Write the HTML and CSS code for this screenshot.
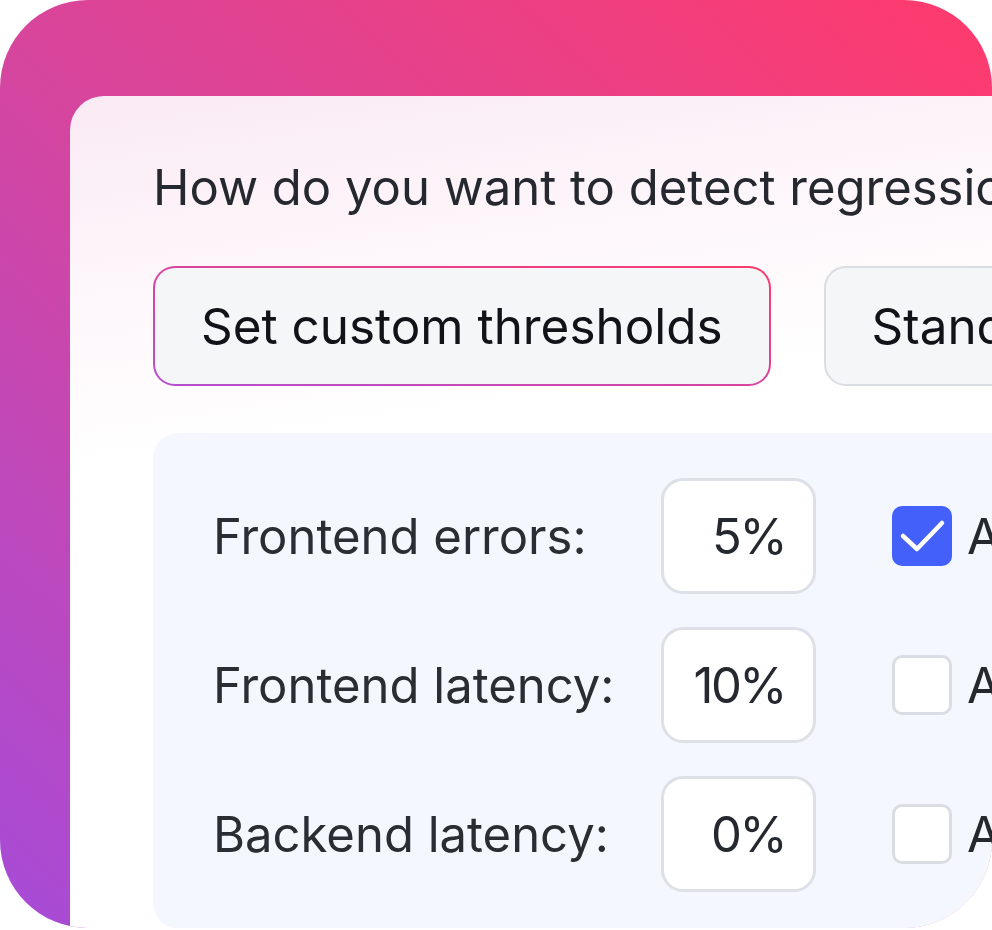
FILE: index.html
```html
<!DOCTYPE html>
<html lang="en">
<head>
    <meta charset="UTF-8">
    <meta name="viewport" content="width=device-width, initial-scale=1.0">
    <title>Regression detection</title>
    <link rel="stylesheet" href="styles.css">
</head>
<body>
    <div class="frame">
        <div class="card">
            <h1 class="question">How do you want to detect regressions?</h1>

            <div class="choices">
                <button class="choice active">Set custom thresholds</button>
                <button class="choice">Standard detection</button>
            </div>

            <div class="panel">
                <div class="row">
                    <label class="row-label">Frontend errors:</label>
                    <input class="pct" type="text" value="5%">
                    <span class="check checked">
                        <svg width="60" height="60" viewBox="0 0 60 60">
                            <path d="M11 30 L25 43 L50 17" fill="none" stroke="#fff" stroke-width="4.5" stroke-linecap="round" stroke-linejoin="round"/>
                        </svg>
                    </span>
                    <span class="check-label">Alert on regression</span>
                </div>
                <div class="row">
                    <label class="row-label">Frontend latency:</label>
                    <input class="pct" type="text" value="10%">
                    <span class="check"></span>
                    <span class="check-label">Alert on regression</span>
                </div>
                <div class="row">
                    <label class="row-label">Backend latency:</label>
                    <input class="pct" type="text" value="0%">
                    <span class="check"></span>
                    <span class="check-label">Alert on regression</span>
                </div>
            </div>
        </div>
    </div>
</body>
</html>
```

FILE: styles.css
```css
body {
    margin: 0;
    background-color: #ffffff;
    font-family: Inter, 'Noto Sans', sans-serif;
    color: #25282f;
}
.frame {
    width: 992px;
    height: 928px;
    box-sizing: border-box;
    padding: 96px 0 0 70px;
    border-radius: 88px;
    overflow: hidden;
    background: linear-gradient(to top right, #a64bd8, #d8459b 50%, #ff3a6c);
}
.card {
    width: 1200px;
    height: 900px;
    box-sizing: border-box;
    padding: 62px 0 0 83px;
    border-top-left-radius: 34px;
    background: linear-gradient(172deg, #faeaf4 0%, #fdf6fa 18%, #ffffff 35%);
}
.question {
    margin: 0;
    font-size: 49px;
    font-weight: 400;
    line-height: 60px;
    white-space: nowrap;
    color: #25282f;
}
.choices {
    display: flex;
    gap: 53px;
    margin-top: 48px;
}
.choice {
    flex-shrink: 0;
    height: 120px;
    padding: 0 46px;
    border: 2px solid #dadde2;
    border-radius: 22px;
    background-color: #f5f6f8;
    font-family: inherit;
    font-size: 49.4px;
    color: #111318;
    white-space: nowrap;
}
.choice.active {
    border-color: transparent;
    background: linear-gradient(#f5f6f8, #f5f6f8) padding-box,
                linear-gradient(to top right, #b44fd0, #fd3a6e) border-box;
}
.panel {
    margin-top: 47px;
    padding: 45px 0 37px 60px;
    border-radius: 26px;
    background-color: #f4f7fe;
    display: flex;
    flex-direction: column;
    gap: 33px;
}
.row {
    display: flex;
    align-items: center;
}
.row-label {
    flex-shrink: 0;
    width: 448px;
    font-size: 49px;
    white-space: nowrap;
    color: #2a2d33;
}
.pct {
    flex-shrink: 0;
    width: 155px;
    height: 116px;
    box-sizing: border-box;
    padding: 0 28px 0 0;
    border: 3px solid #dde0e6;
    border-radius: 22px;
    background-color: #ffffff;
    font-family: inherit;
    font-size: 49px;
    letter-spacing: -2.5px;
    color: #25282f;
    text-align: right;
}
.check {
    flex-shrink: 0;
    width: 60px;
    height: 60px;
    box-sizing: border-box;
    margin-left: 76px;
    border: 3px solid #dadde3;
    border-radius: 10px;
    background-color: #ffffff;
}
.check.checked {
    border: none;
    background-color: #4360fb;
}
.check svg {
    display: block;
}
.check-label {
    flex-shrink: 0;
    margin-left: 15px;
    font-size: 49px;
    white-space: nowrap;
    color: #25282f;
}
```
